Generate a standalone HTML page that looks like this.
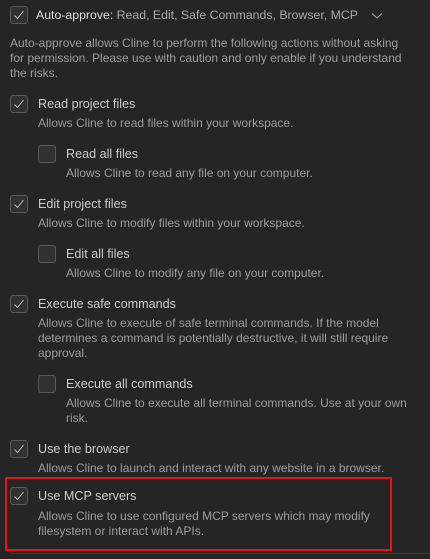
<!DOCTYPE html><html><head><style>
body{margin:0;width:430px;height:559px;background:#252526;font-family:"Liberation Sans",sans-serif;overflow:hidden;position:relative}
.a{position:absolute;white-space:nowrap}
.cb{position:absolute;width:16px;height:16px;border:1px solid #5a5a5a;border-radius:3px;background:#313131}
.cb svg{position:absolute;left:1px;top:1px}
.t{font-size:12.6px;color:#cccccc;margin-top:1px}
.d{font-size:12px;color:#9d9d9d;line-height:15px}
</style></head><body>
<div class="cb" style="left:10px;top:6px"><svg width="14" height="14"><path d="M2.5 7.5L5.5 10.5L11.5 3" stroke="#bbb" fill="none" stroke-width="1"/></svg></div>
<div class="a" style="left:36px;top:8px;font-size:12.3px"><span style="color:#ddd">Auto-approve:</span> <span style="color:#aaa">Read, Edit, Safe Commands, Browser, MCP</span></div>
<svg class="a" style="left:371px;top:12px" width="12" height="8"><path d="M1 1.5L6 6L11 1.5" stroke="#aaa" fill="none"/></svg>
<div class="a d" style="left:10px;top:36px">Auto-approve allows Cline to perform the following actions without asking<br>for permission. Please use with caution and only enable if you understand<br>the risks.</div>

<div class="cb" style="left:10px;top:95px"><svg width="14" height="14"><path d="M2.5 7.5L5.5 10.5L11.5 3" stroke="#bbb" fill="none" stroke-width="1"/></svg></div>
<div class="a t" style="left:38px;top:96px">Read project files</div>
<div class="a d" style="left:38px;top:116px">Allows Cline to read files within your workspace.</div>
<div class="cb" style="left:38px;top:145px"></div>
<div class="a t" style="left:66px;top:146px">Read all files</div>
<div class="a d" style="left:66px;top:166px">Allows Cline to read any file on your computer.</div>

<div class="cb" style="left:10px;top:195px"><svg width="14" height="14"><path d="M2.5 7.5L5.5 10.5L11.5 3" stroke="#bbb" fill="none" stroke-width="1"/></svg></div>
<div class="a t" style="left:38px;top:196px">Edit project files</div>
<div class="a d" style="left:38px;top:216px">Allows Cline to modify files within your workspace.</div>
<div class="cb" style="left:38px;top:245px"></div>
<div class="a t" style="left:66px;top:246px">Edit all files</div>
<div class="a d" style="left:66px;top:266px">Allows Cline to modify any file on your computer.</div>

<div class="cb" style="left:10px;top:295px"><svg width="14" height="14"><path d="M2.5 7.5L5.5 10.5L11.5 3" stroke="#bbb" fill="none" stroke-width="1"/></svg></div>
<div class="a t" style="left:38px;top:296px">Execute safe commands</div>
<div class="a d" style="left:38px;top:316px">Allows Cline to execute of safe terminal commands. If the model<br>determines a command is potentially destructive, it will still require<br>approval.</div>
<div class="cb" style="left:38px;top:375px"></div>
<div class="a t" style="left:66px;top:376px">Execute all commands</div>
<div class="a d" style="left:66px;top:396px">Allows Cline to execute all terminal commands. Use at your own<br>risk.</div>

<div class="cb" style="left:10px;top:440px"><svg width="14" height="14"><path d="M2.5 7.5L5.5 10.5L11.5 3" stroke="#bbb" fill="none" stroke-width="1"/></svg></div>
<div class="a t" style="left:38px;top:441px">Use the browser</div>
<div class="a d" style="left:38px;top:461px">Allows Cline to launch and interact with any website in a browser.</div>

<div class="a" style="left:5px;top:477px;width:383px;height:70px;border:2px solid #e8141c"></div>
<div class="cb" style="left:10px;top:487px"><svg width="14" height="14"><path d="M2.5 7.5L5.5 10.5L11.5 3" stroke="#bbb" fill="none" stroke-width="1"/></svg></div>
<div class="a t" style="left:38px;top:488px">Use MCP servers</div>
<div class="a d" style="left:38px;top:509px">Allows Cline to use configured MCP servers which may modify<br>filesystem or interact with APIs.</div>
<div class="a" style="left:10px;top:553px;width:420px;height:1px;background:#3c3c3c"></div>
</body></html>
